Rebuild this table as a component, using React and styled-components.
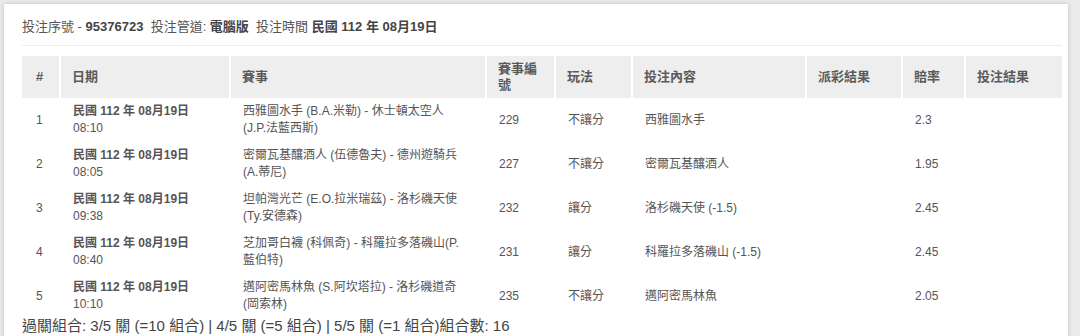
import React from "react";
import styled, { createGlobalStyle } from "styled-components";

const GlobalStyle = createGlobalStyle`
  html, body {
    margin: 0;
    padding: 0;
    background: #ececec;
    overflow: hidden;
  }
  body {
    font-family: "Liberation Sans", Arial, "Noto Sans CJK TC", sans-serif;
    color: #555;
  }
`;

const Panel = styled.div`
  margin: 4px 12px 0 4px;
  height: 340px;
  background: #fff;
  box-shadow: 0 0 5px rgba(0, 0, 0, 0.2);
  padding: 0 6px 0 18px;
  box-sizing: border-box;
`;

const InfoLine = styled.div`
  font-size: 13px;
  height: 41px;
  line-height: 46px;
  border-bottom: 1px solid #eee;
  color: #555;
`;

const Strong = styled.b`
  font-weight: bold;
  color: #444;
`;

const Table = styled.table`
  margin-top: 10px;
  width: 1040px;
  border-collapse: collapse;
  table-layout: fixed;
`;

const Th = styled.th`
  background: #eeeeee;
  height: 42px;
  text-align: left;
  font-size: 13px;
  font-weight: bold;
  line-height: 16px;
  color: #5a5a5a;
  padding: 0 8px 0 ${(p) => (p.$first ? "14px" : "11px")};
  border-left: ${(p) => (p.$first ? "0" : "2px solid #fff")};
  vertical-align: middle;
`;

const Td = styled.td`
  font-size: 12px;
  line-height: 17px;
  padding: 5px 8px 5px ${(p) => (p.$first ? "14px" : "13px")};
  height: 34px;
  vertical-align: middle;
  white-space: nowrap;
  color: #555;
`;

const DateMain = styled.div`
  font-weight: bold;
`;

const Footer = styled.div`
  font-size: 15px;
  line-height: 18px;
  color: #444;
  margin-top: -1px;
`;

const cols = [38, 170, 256, 69, 77, 174, 96, 63, 97];
const heads = ["#", "日期", "賽事", "賽事編\n號", "玩法", "投注內容", "派彩結果", "賠率", "投注結果"];

const rows = [
  { n: 1, time: "08:10", match: ["西雅圖水手 (B.A.米勒) - 休士頓太空人", "(J.P.法藍西斯)"], id: 229, play: "不讓分", pick: "西雅圖水手", odds: "2.3" },
  { n: 2, time: "08:05", match: ["密爾瓦基釀酒人 (伍德魯夫) - 德州遊騎兵", "(A.蒂尼)"], id: 227, play: "不讓分", pick: "密爾瓦基釀酒人", odds: "1.95" },
  { n: 3, time: "09:38", match: ["坦帕灣光芒 (E.O.拉米瑞茲) - 洛杉磯天使", "(Ty.安德森)"], id: 232, play: "讓分", pick: "洛杉磯天使 (-1.5)", odds: "2.45" },
  { n: 4, time: "08:40", match: ["芝加哥白襪 (科佩奇) - 科羅拉多落磯山(P.", "藍伯特)"], id: 231, play: "讓分", pick: "科羅拉多落磯山 (-1.5)", odds: "2.45" },
  { n: 5, time: "10:10", match: ["邁阿密馬林魚 (S.阿坎塔拉) - 洛杉磯道奇", "(岡索林)"], id: 235, play: "不讓分", pick: "邁阿密馬林魚", odds: "2.05" },
];

export default function App() {
  return (
    <>
      <GlobalStyle />
      <Panel>
        <InfoLine>
          投注序號 - <Strong>95376723</Strong>&nbsp; 投注管道: <Strong>電腦版</Strong>&nbsp; 投注時間{" "}
          <Strong>民國 112 年 08月19日</Strong>
        </InfoLine>
        <Table>
          <colgroup>
            {cols.map((w, i) => (
              <col key={i} style={{ width: w }} />
            ))}
          </colgroup>
          <thead>
            <tr>
              {heads.map((h, i) => (
                <Th key={i} $first={i === 0}>
                  {h.split("\n").map((l, j) => (
                    <div key={j}>{l}</div>
                  ))}
                </Th>
              ))}
            </tr>
          </thead>
          <tbody>
            {rows.map((r) => (
              <tr key={r.n}>
                <Td $first>{r.n}</Td>
                <Td>
                  <DateMain>民國 112 年 08月19日</DateMain>
                  <div>{r.time}</div>
                </Td>
                <Td>
                  {r.match.map((l, j) => (
                    <div key={j}>{l}</div>
                  ))}
                </Td>
                <Td>{r.id}</Td>
                <Td>{r.play}</Td>
                <Td>{r.pick}</Td>
                <Td></Td>
                <Td>{r.odds}</Td>
                <Td></Td>
              </tr>
            ))}
          </tbody>
        </Table>
        <Footer>過關組合: 3/5 關 (=10 組合) | 4/5 關 (=5 組合) | 5/5 關 (=1 組合)組合數: 16</Footer>
      </Panel>
    </>
  );
}
